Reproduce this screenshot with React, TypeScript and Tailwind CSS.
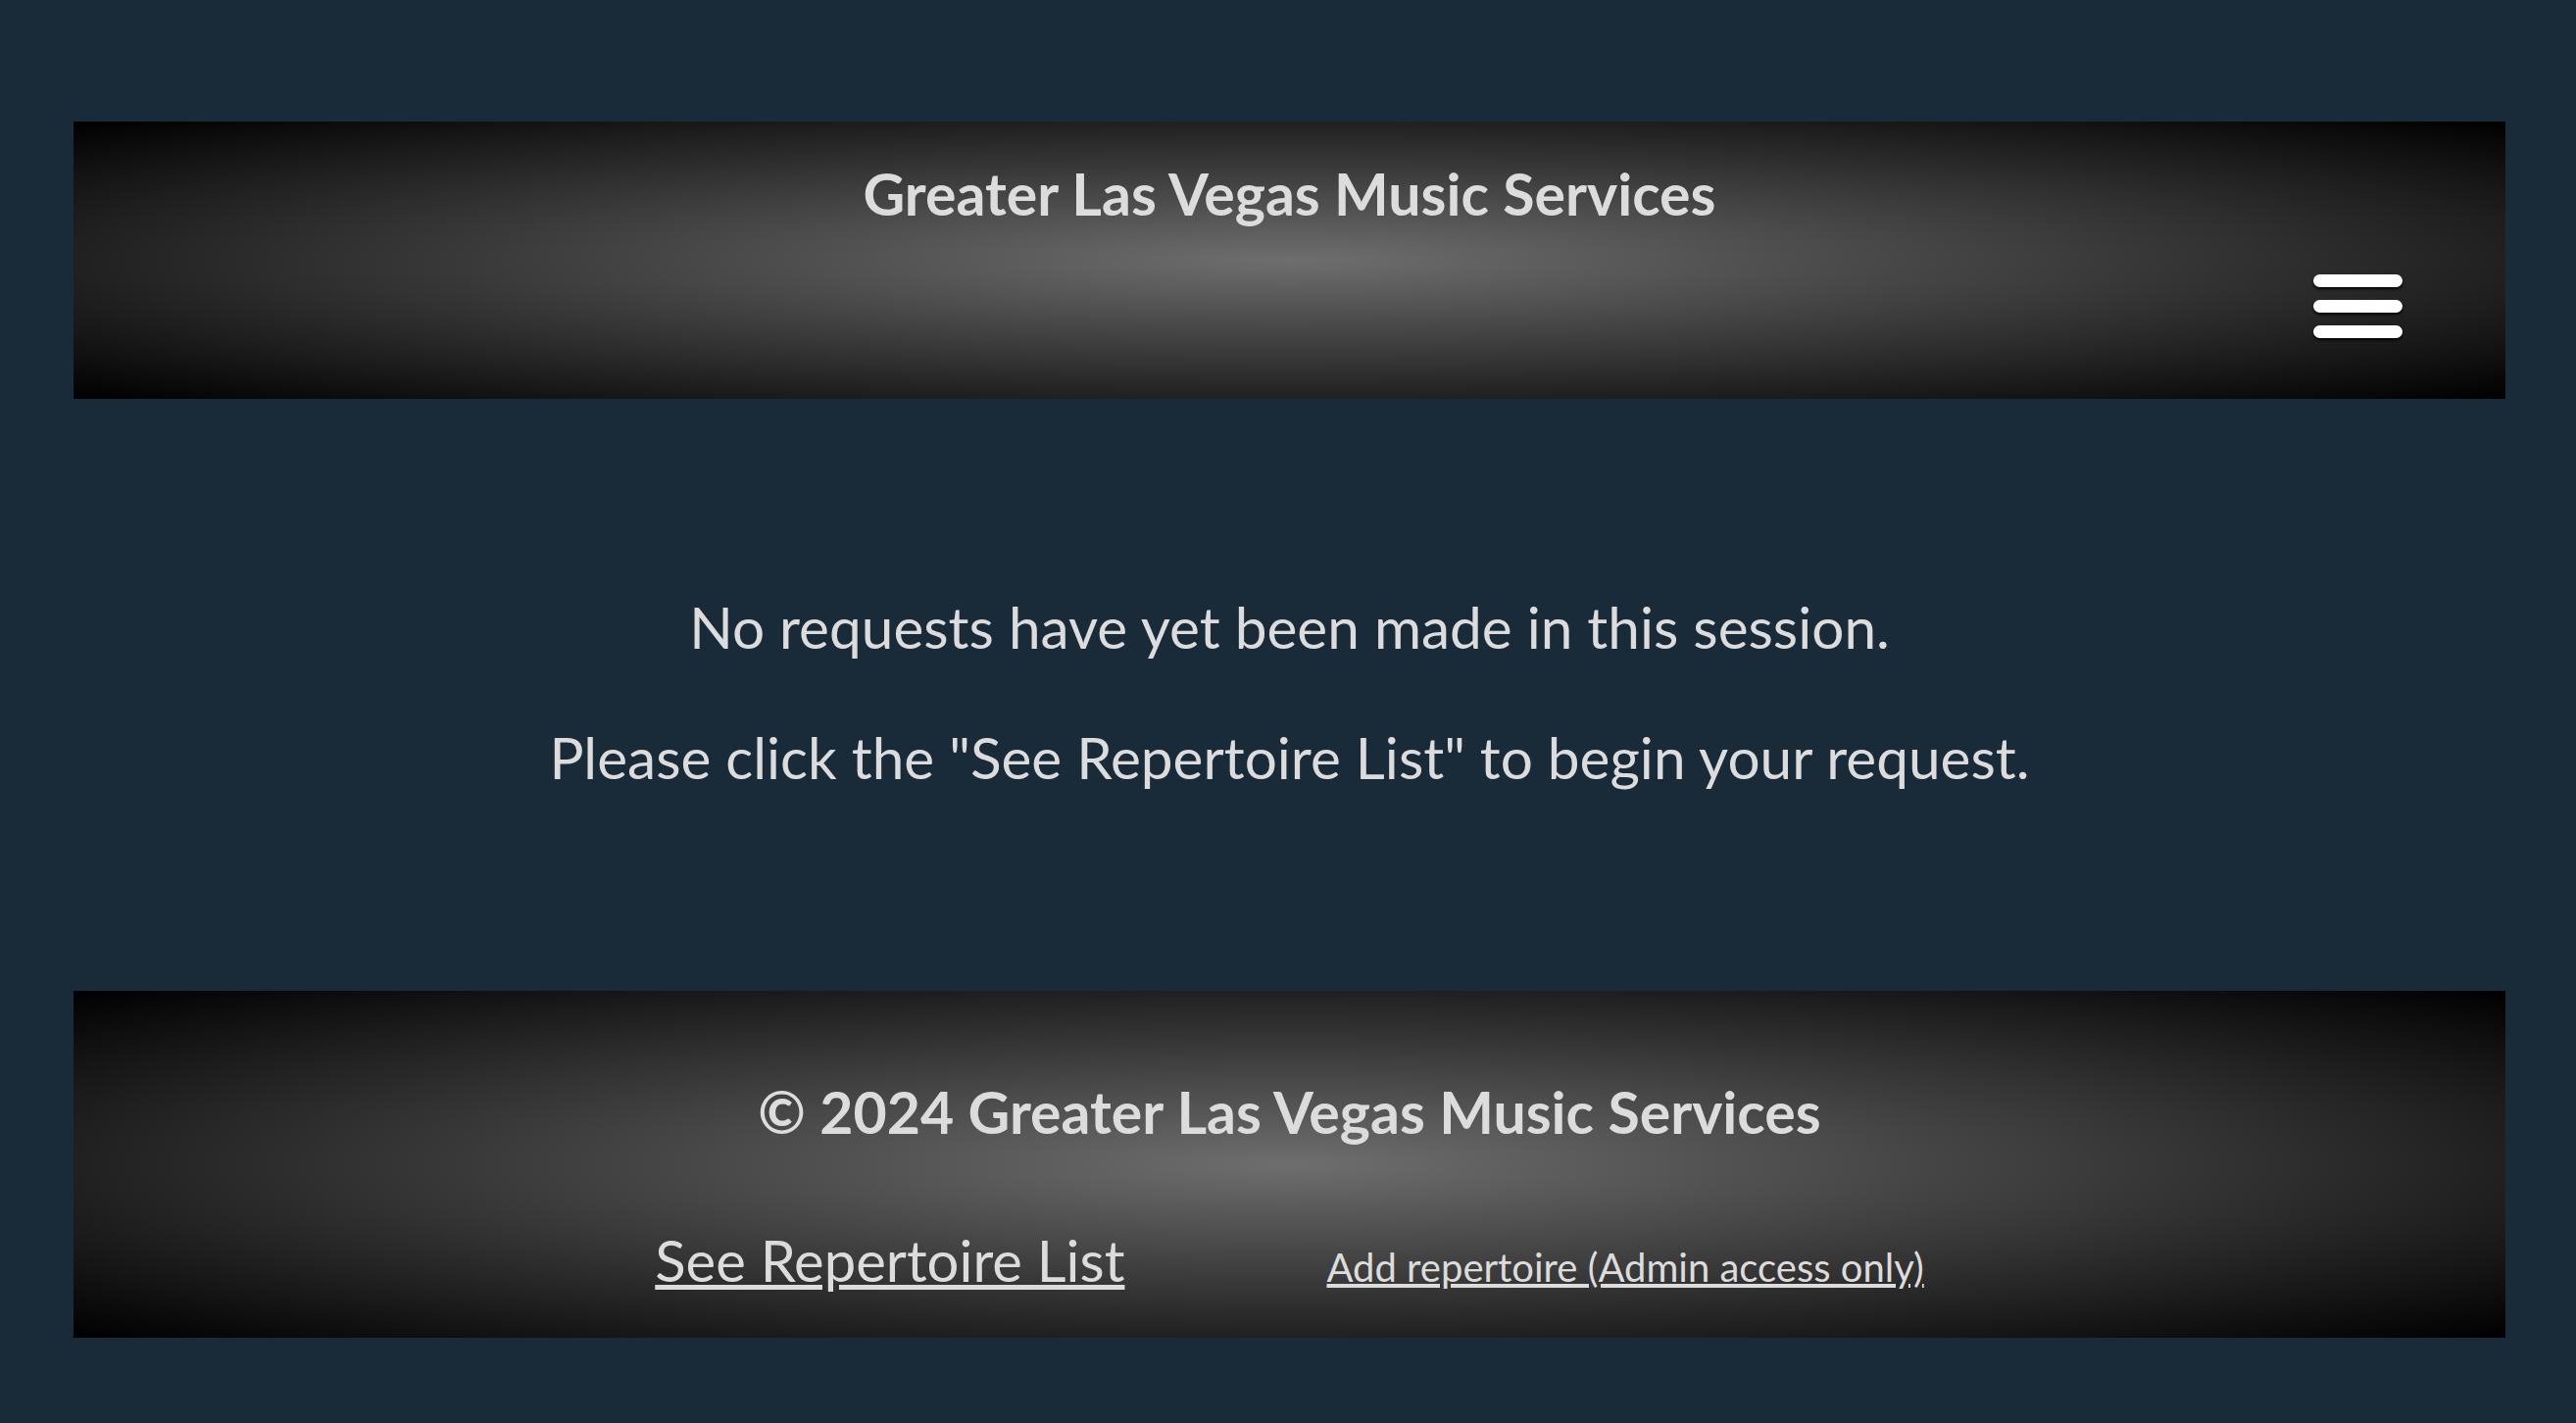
import React from "react";

const HamburgerButton = () => {
  return (
    <button className="flex flex-col gap-[13px] cursor-pointer" aria-label="Menu">
      <span className="block w-[91px] h-[13px] rounded-full bg-white shadow-[0_2px_3px_rgba(0,0,0,0.9)]" />
      <span className="block w-[91px] h-[13px] rounded-full bg-white shadow-[0_2px_3px_rgba(0,0,0,0.9)]" />
      <span className="block w-[91px] h-[13px] rounded-full bg-white shadow-[0_2px_3px_rgba(0,0,0,0.9)]" />
    </button>
  );
};

const App = () => {
  return (
    <div className="min-h-screen bg-[#192a38] pl-[75px] pr-[72px] pt-[124px] pb-[87px] font-['Lato',sans-serif] text-[#dcdcdc]">
      {/* header */}
      <header className="h-[283px] bg-[radial-gradient(ellipse_at_center,#6e6e6e_0%,#000_100%)] pt-[45px]">
        <h1 className="text-center text-[59px] leading-[58px] font-bold">
          Greater Las Vegas Music Services
        </h1>
        <div className="flex justify-end pr-[105px] mt-[53px]">
          <HamburgerButton />
        </div>
      </header>

      {/* request list (empty) */}
      <main className="h-[604px] pt-[204px] text-center text-[58.5px] leading-[56px]">
        <p>No requests have yet been made in this session.</p>
        <p className="mt-[77px]">
          Please click the "See Repertoire List" to begin your request.
        </p>
      </main>

      <footer className="h-[354px] bg-[radial-gradient(ellipse_at_center,#6e6e6e_0%,#000_100%)] pt-[95px]">
        <p className="text-center text-[59px] leading-[58px] font-bold">
          © 2024 Greater Las Vegas Music Services
        </p>
        <div className="flex justify-center items-baseline gap-[206px] mt-[93px]">
          <a href="#" className="text-[58px] leading-[58px] underline">
            See Repertoire List
          </a>
          <a href="#" className="text-[40px] leading-[40px] underline">
            Add repertoire (Admin access only)
          </a>
        </div>
      </footer>
    </div>
  );
};

export default App;
